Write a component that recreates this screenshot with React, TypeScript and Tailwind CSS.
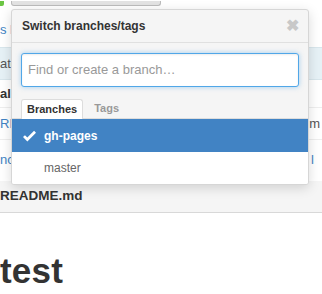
import React from "react";

function Check() {
  return (
    <svg width="13" height="12" viewBox="0 3.5 12 10" fill="white" aria-hidden>
      <path d="M12 5.5l-8 8-4-4 1.8-1.8L4 9.9l6.2-6.2z" />
    </svg>
  );
}

export default function App() {
  return (
    <div
      className="relative w-[322px] h-[294px] overflow-hidden bg-white text-[#333]"
      style={{ fontFamily: '"Liberation Sans", Arial, sans-serif' }}
    >
      {/* background page */}
      <div className="flex flex-col">
        <div className="flex h-[6px] items-end">
          <div className="w-[4px] h-[5px] bg-[#6cc644] rounded-br-[2px]" />
          <div className="ml-[7px] w-[150px] h-[5px] bg-[#e3e3e3] border border-t-0 border-[#bbb] rounded-b-[3px]" />
        </div>
        <div className="h-[41px] flex items-center pt-[6px] text-[13px] text-[#4183c4]">s b</div>
        <div className="h-[33px] flex items-center justify-between bg-[#e6f1f6] border-y border-[#d8e6ec] text-[13px] text-[#555]">
          <span>ate</span>
        </div>
        <div className="h-[28px] flex items-center font-bold text-[13px] text-[#333] border-b border-[#eee]">al</div>
        <div className="h-[32px] flex items-center justify-between border-b border-[#eee] text-[13px]">
          <span className="text-[#4183c4]">RE</span>
          <span className="text-[#555] pr-[2px]">m</span>
        </div>
        <div className="h-[41px] flex items-center justify-between text-[13px] pb-[2px]">
          <span className="text-[#4183c4]">nc</span>
          <span className="text-[#4183c4] pr-[8px]">l</span>
        </div>
        <div className="h-[32px] flex items-center bg-[#f5f5f5] border-b border-[#d8d8d8] font-bold text-[13.5px] text-[#333]">
          README.md
        </div>
        <div className="pt-[40px] text-[35px] font-bold leading-none tracking-[0.2px] text-[#333]">test</div>
      </div>

      {/* popup */}
      <div className="absolute left-[11px] top-[9px] w-[298px] bg-[#f5f5f5] border border-[#d6d6d6] rounded-[3px] shadow-[0_3px_12px_rgba(0,0,0,0.15)] overflow-hidden">
        <div className="h-[33px] flex items-center justify-between pl-[10px] pr-[9px] border-b border-[#e0e0e0]">
          <span className="text-[12px] font-bold text-[#333]">Switch branches/tags</span>
          <span className="text-[#c8c8c8] text-[16px] font-bold leading-none">✖</span>
        </div>
        <div className="px-[9px] pt-[10px]">
          <div className="h-[34px] bg-white border border-[#51a7e8] rounded-[3px] shadow-[inset_0_1px_2px_rgba(0,0,0,0.075),0_0_5px_rgba(81,167,232,0.5)] flex items-center px-[6px] text-[13px] text-[#999]">
            Find or create a branch…
          </div>
        </div>
        <div className="flex items-end px-[9px] border-b border-[#ddd] h-[32px]">
          <div className="h-[20px] px-[5px] flex items-center bg-white border border-b-0 border-[#ddd] rounded-t-[3px] text-[11px] font-bold text-[#333] -mb-px">
            Branches
          </div>
          <div className="h-[20px] pl-[11px] flex items-center text-[11px] font-bold text-[#999]">Tags</div>
        </div>
        <div className="bg-white">
          <div className="h-[33px] flex items-center bg-[#4183c4] text-white font-bold text-[12px]">
            <span className="w-[32px] flex justify-center pl-[2px]">
              <Check />
            </span>
            <span>gh-pages</span>
          </div>
          <div className="h-[32px] flex items-center text-[12px] text-[#666] pl-[32px]">master</div>
        </div>
      </div>
    </div>
  );
}
